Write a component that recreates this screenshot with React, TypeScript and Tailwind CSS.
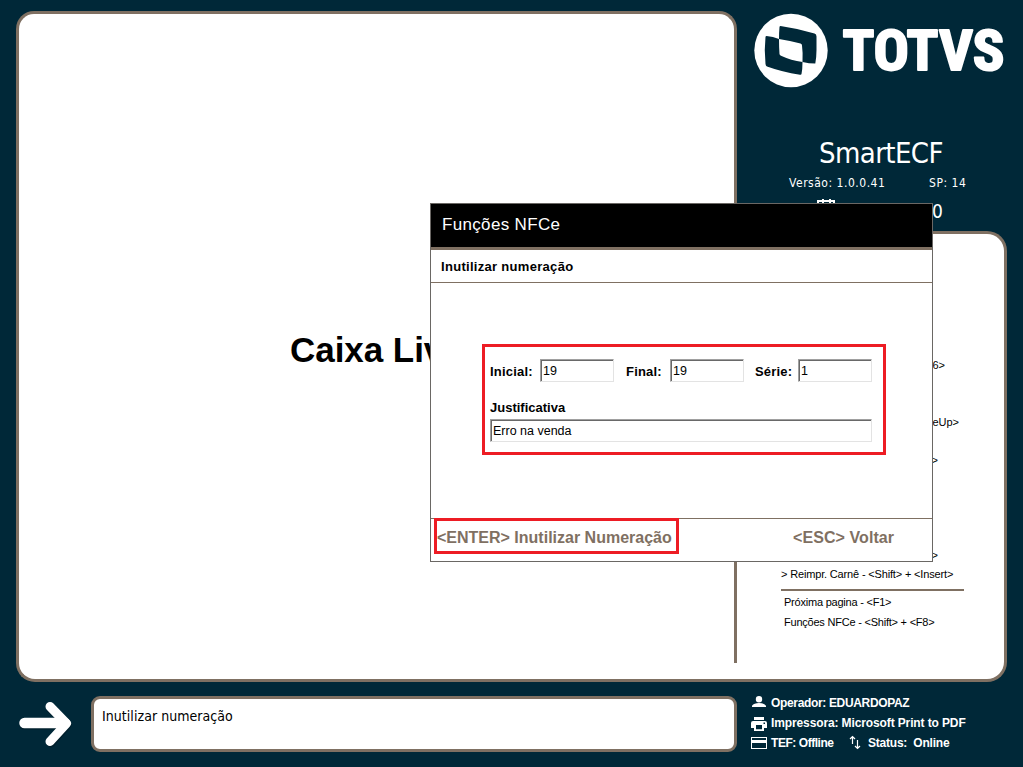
import type { ReactNode } from "react";

const shortcuts = [
  { text: "6>", width: "w-[165px]" },
  { text: "", width: "w-[165px]" },
  { text: "", width: "w-[165px]" },
  { text: "PageUp>", width: "w-[179px]" },
  { text: "", width: "w-[165px]" },
  { text: ">", width: "w-[158px]" },
  { text: "", width: "w-[165px]" },
  { text: "", width: "w-[165px]" },
  { text: "", width: "w-[165px]" },
  { text: "", width: "w-[165px]" },
  { text: ">", width: "w-[158px]" },
];

const tahoma = "font-['DejaVu_Sans_Condensed','DejaVu_Sans',sans-serif] [font-stretch:condensed]";

function Logo() {
  return (
    <svg className="block h-[90px] w-[286px] shrink-0" viewBox="737 11 286 90">
      <circle cx="791" cy="50.5" r="36.700" fill="#fff" />
      <path
        d="M780.5 26Q798 28.500 814.500 33.500Q816.500 34.200 816.500 36.500V50Q816.500 57 815.300 63.500Q809 63.500 802.500 62Q803 53 802 45.500Q802 44 800.500 43.500Q790 40.500 779 39Q779 32 779.500 27Q779.600 26 780.500 26Z"
        fill="#002838"
      />
      <path
        d="M766.500 36Q773 36.500 779 39Q779 47 779.500 54Q779.600 55.200 781 55.800Q791 60.500 802.500 62Q802.500 69 801.500 74Q801.300 75 800 74.700Q782 72 767 66.500Q765.800 66 765.500 64Q764 50 765.500 37Q765.600 36 766.500 36Z"
        fill="#002838"
      />
      <text
        x="842.500"
        y="70"
        textLength="162"
        lengthAdjust="spacingAndGlyphs"
        fill="#fff"
        stroke="#fff"
        strokeWidth="2"
        strokeLinejoin="round"
        className="font-[Roboto,sans-serif] text-[55px] font-bold"
      >
        TOTVS
      </text>
    </svg>
  );
}

function Field({ label, value, className }: { label: string; value: string; className: string }) {
  return (
    <label className={`flex items-center ${className}`}>
      <span className="grow pt-[2px] text-[13px] font-bold tracking-[0.200px]">{label}</span>
      <Input value={value} className="w-[74px]" />
    </label>
  );
}

function Input({ value, className }: { value: string; className: string }) {
  return (
    <span className={`block h-[23px] border border-t-[#a0a0a0] border-r-[#e3e3e3] border-b-[#e3e3e3] border-l-[#a0a0a0] ${className}`}>
      <span className="block h-[21px] border-t border-l border-[#696969] pl-px text-[12.500px] leading-[20px]">{value}</span>
    </span>
  );
}

function Dialog() {
  return (
    <section className="absolute top-[203px] left-[430px] flex h-[359px] w-[503px] flex-col border border-[#6a6764] bg-white">
      <header className="h-[46px] shrink-0 border-b-3 border-[#7f7062] bg-black pl-[11px] text-[17px] leading-[42px] tracking-[0.330px] text-white">
        Funções NFCe
      </header>
      <h2 className="h-[33px] shrink-0 border-b border-[#7f7062] pl-[10px] text-[13px] leading-[33px] font-bold tracking-[0.300px]">
        Inutilizar numeração
      </h2>
      <div className="flex grow flex-col pt-[61px] pl-[51px]">
        <form className="flex h-[111px] w-[404px] flex-col border-3 border-[#ed1c24] px-[5px] pt-[12px]">
          <div className="flex">
            <Field label="Inicial:" value="19" className="w-[124px]" />
            <Field label="Final:" value="19" className="ml-[12px] w-[118px]" />
            <Field label="Série:" value="1" className="ml-[11px] w-[117px]" />
          </div>
          <span className="mt-[16px] text-[13px] leading-[20px] font-bold">Justificativa</span>
          <Input value="Erro na venda" className="mt-px w-[382px]" />
        </form>
      </div>
      <footer className="flex h-[43px] shrink-0 border-t border-[#7f7062] text-[16px] font-bold text-[#7f7062]">
        <button className="mt-[-1px] ml-[3px] h-[36px] w-[245px] border-3 border-[#ed1c24] text-left leading-[34px] whitespace-nowrap">
          &lt;ENTER&gt; Inutilizar Numeração
        </button>
        <button className="ml-[114px] h-[37px] leading-[37px] tracking-[0.080px]">&lt;ESC&gt; Voltar</button>
      </footer>
    </section>
  );
}

function StatusRow({ icon, children }: { icon: ReactNode; children: ReactNode }) {
  return (
    <div className="flex h-5 items-center">
      <svg className="mr-[4px] h-4 w-4 shrink-0" viewBox="0 0 16 16" fill="#fff">
        {icon}
      </svg>
      {children}
    </div>
  );
}

export default function App() {
  return (
    <main className="relative flex h-[767px] w-[1023px] flex-col overflow-hidden bg-[#002838] font-['Liberation_Sans',sans-serif] text-black">
      <div className="flex h-[682px] pt-[11px] pl-[16px]">
        <div className="flex w-[721px] flex-col">
          <div className="h-[652px] rounded-t-[18px] border-x-3 border-t-3 border-[#7f7062] bg-white pt-[315px] pl-[271px]">
            <h1 className="text-[35px] leading-[42px] font-bold tracking-[-0.050px]">Caixa Livre</h1>
          </div>
          <div className="h-[19px] rounded-bl-[19px] border-b-3 border-l-3 border-[#7f7062] bg-white" />
        </div>
        <div className="flex w-[286px] flex-col">
          <div className={`flex h-[220px] flex-col text-white ${tahoma}`}>
            <Logo />
            <div className="pt-[35px] pl-[82px] text-[29px] leading-[34px] tracking-[-0.600px]">SmartECF</div>
            <div className="flex pt-[3px] pl-[52px] text-[12px] leading-[20px] tracking-[0.520px]">
              <span className="w-[140px]">Versão: 1.0.0.41</span>
              <span>SP: 14</span>
            </div>
            <div className="flex pt-[4px] pl-[79px] text-[19px] leading-[28px]">
              <svg className="h-[20px] w-[20px]" viewBox="0 0 20 20" fill="none" stroke="#fff" strokeWidth="2">
                <path d="M2 6V4H18V18H2V4M7 2V7M14 2V7" />
              </svg>
              <span className="ml-[96px]">0</span>
            </div>
          </div>
          <aside className="h-[451px] w-[270px] rounded-r-[20px] border-y-3 border-r-3 border-[#7f7062] bg-white pt-[122px] pl-[43px] text-[11px]">
            {shortcuts.map((item, index) => (
              <div key={index} className={`h-[19px] text-right leading-[19px] ${item.width}`}>
                {item.text}
              </div>
            ))}
            <div className="h-[19px] pl-px leading-[19px] tracking-[-0.160px]">&gt; Reimpr. Carnê - &lt;Shift&gt; + &lt;Insert&gt;</div>
            <div className="mt-[5px] ml-px h-[2px] w-[183px] bg-[#7f7062]" />
            <div className="mt-px pl-[4px] leading-[20px] tracking-[-0.220px]">
              <div>Próxima pagina - &lt;F1&gt;</div>
              <div>Funções NFCe - &lt;Shift&gt; + &lt;F8&gt;</div>
            </div>
          </aside>
        </div>
      </div>
      <div className="flex pt-[14px] pl-[16px]">
        <svg className="h-[56px] w-[75px] shrink-0" viewBox="16 696 75 56" fill="none" stroke="#001722" strokeWidth="9" strokeLinecap="round" strokeLinejoin="round">
          <path d="M24 725H66M51 708.500L67 725L51 743" opacity=".55" />
          <path stroke="#fff" strokeWidth="10.500" d="M24.500 723H65" />
          <path stroke="#fff" d="M50 706.500L66.500 723.500L50 741.500" />
        </svg>
        <div className={`h-[56px] w-[646px] rounded-[9px] border-3 border-[#7f7062] bg-white pl-[8px] text-[14px] leading-[34px] tracking-[0.050px] ${tahoma}`}>
          Inutilizar numeração
        </div>
        <div className="mt-[-3px] pl-[14px] text-[12px] font-bold whitespace-pre text-white">
          <StatusRow icon={<path d="M8 1a3.200 3.200 0 1 1 0 6.400A3.200 3.200 0 0 1 8 1ZM1 12V10.800Q3 8 8 8T15 10.800V12Z" />}>
            <span className="tracking-[-0.340px]">Operador: EDUARDOPAZ</span>
          </StatusRow>
          <StatusRow icon={<path fillRule="evenodd" d="M3 2H13V5H3ZM2 6H14Q16 6 16 8V13H13V16H3V13H0V8Q0 6 2 6ZM5 10V14.200H11V10ZM12.500 7.500V9H14V7.500Z" />}>
            <span className="tracking-[-0.120px]">Impressora: Microsoft Print to PDF</span>
          </StatusRow>
          <StatusRow icon={<path fillRule="evenodd" d="M0 2H16V14H0ZM1 3V5H15V3ZM1 8V13H15V8Z" />}>
            <span className="w-[63px] tracking-[-0.450px]">TEF: Offline</span>
            <svg className="mr-[5px] ml-[15px] h-[16px] w-[14px]" viewBox="0 0 14 16" fill="none" stroke="#fff" strokeWidth="1.200">
              <path d="M3.500 9V1.500M1 4L3.500 1.500L6 4M8.500 5V13.500M6 11L8.500 13.500L11 11" />
            </svg>
            <span className="tracking-[-0.220px]">Status:  Online</span>
          </StatusRow>
        </div>
      </div>
      <Dialog />
    </main>
  );
}
